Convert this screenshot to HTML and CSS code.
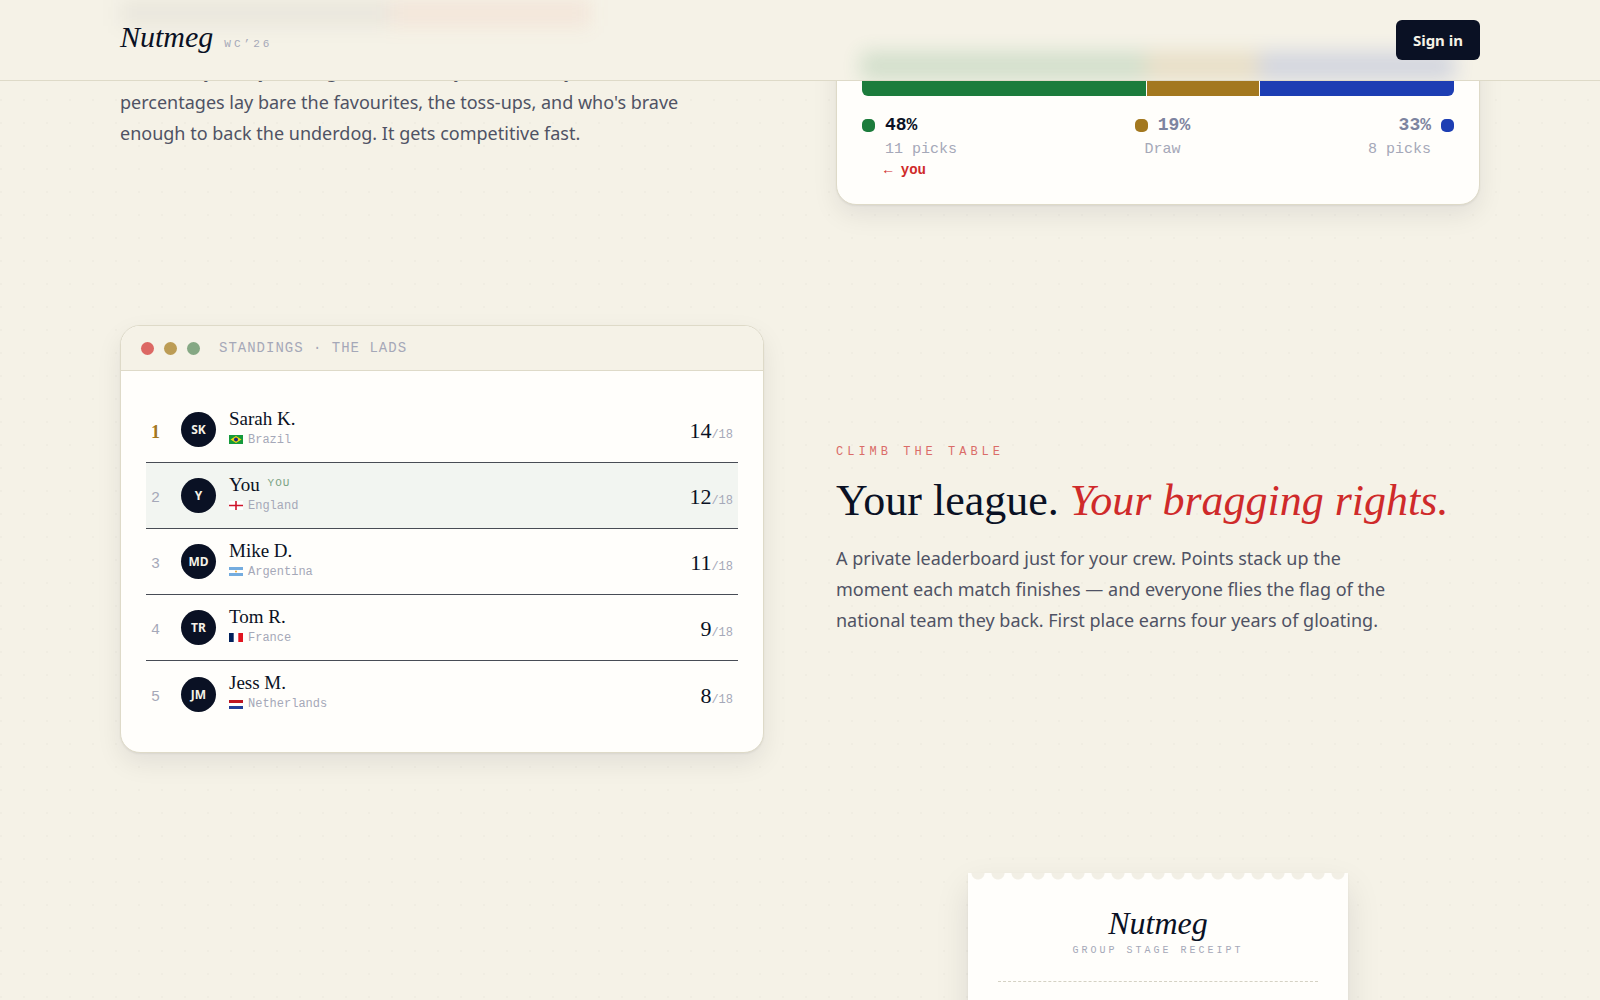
FILE: index.html
```html
<!DOCTYPE html>
<html lang="en">
<head>
    <meta charset="UTF-8">
    <meta name="viewport" content="width=device-width, initial-scale=1.0">
    <title>Nutmeg WC’26</title>
    <link rel="stylesheet" href="styles.css">
</head>
<body>
    <header class="site-header">
        <!-- Soft colour washes behind the bar -->
        <div class="glow" aria-hidden="true">
            <div class="glow-half">
                <span class="glow-ink"></span>
                <span class="glow-red"></span>
            </div>
            <div class="glow-half glow-split">
                <span class="home" style="width: 48%"></span>
                <span class="draw" style="width: 19%"></span>
                <span class="away" style="width: 33%"></span>
            </div>
        </div>
        <div class="brand">
            <a class="logo" href="#">Nutmeg</a>
            <span class="edition">WC’26</span>
        </div>
        <button class="sign-in" type="button">Sign in</button>
    </header>

    <main class="features">
        <!-- Pick split -->
        <section class="feature">
            <div class="feature-text feature-text-low">
                <p class="lead">See exactly how your league called every match today. Live percentages lay bare the favourites, the toss-ups, and who's brave enough to back the underdog. It gets competitive fast.</p>
            </div>
            <div class="card">
                <div class="card-head">
                    <span class="dot dot-red"></span>
                    <span class="dot dot-gold"></span>
                    <span class="dot dot-green"></span>
                </div>
                <div class="card-body">
                    <div class="teams">
                        <svg class="team-flag" viewBox="0 0 14 9"><path fill="#e4e4ea" d="M0 0h14v9H0z"/><path fill="#cf142b" d="M6 0h2v9H6zM0 4h14v1H0z"/></svg>
                        <svg class="team-flag" viewBox="0 0 14 9"><path fill="#009739" d="M0 0h14v9H0z"/><path fill="#fedd00" d="M7 1l5.5 3.5L7 8 1.500 4.500z"/></svg>
                    </div>
                    <div class="split-bar">
                        <span class="home" style="width: 48%"></span>
                        <span class="draw" style="width: 19%"></span>
                        <span class="away" style="width: 33%"></span>
                    </div>
                    <div class="legend">
                        <div class="legend-item">
                            <div class="share mine"><i class="home"></i>48%</div>
                            <div class="picks">11 picks</div>
                            <div class="you-mark">← you</div>
                        </div>
                        <div class="legend-item center">
                            <div class="share"><i class="draw"></i>19%</div>
                            <div class="picks">Draw</div>
                        </div>
                        <div class="legend-item right">
                            <div class="share">33%<i class="away"></i></div>
                            <div class="picks">8 picks</div>
                        </div>
                    </div>
                </div>
            </div>
        </section>

        <!-- Standings -->
        <section class="feature">
            <div class="card">
                <div class="card-head">
                    <span class="dot dot-red"></span>
                    <span class="dot dot-gold"></span>
                    <span class="dot dot-green"></span>
                    <span class="card-title">STANDINGS · THE LADS</span>
                </div>
                <div class="card-body">
                    <table class="standings">
                        <tbody>
                            <tr>
                                <td class="rank first">1</td>
                                <td class="face"><span class="avatar">SK</span></td>
                                <td class="player">
                                    <div class="name">Sarah K.</div>
                                    <div class="team"><svg class="flag" viewBox="0 0 14 9"><path fill="#159a3c" d="M0 0h14v9H0z"/><path fill="#f5d90f" d="M7 1l5.500 3.500L7 8 1.500 4.500z"/><circle cx="7" cy="4.500" r="2" fill="#1b2c7c"/></svg>Brazil</div>
                                </td>
                                <td class="score">14<small>/18</small></td>
                            </tr>
                            <tr class="is-you">
                                <td class="rank">2</td>
                                <td class="face"><span class="avatar">Y</span></td>
                                <td class="player">
                                    <div class="name">You <span class="you-tag">YOU</span></div>
                                    <div class="team"><svg class="flag" viewBox="0 0 14 9"><path fill="#fff" d="M0 0h14v9H0z"/><path fill="#cf142b" d="M6.200 0h1.600v9H6.200zM0 3.700h14v1.600H0z"/></svg>England</div>
                                </td>
                                <td class="score">12<small>/18</small></td>
                            </tr>
                            <tr>
                                <td class="rank">3</td>
                                <td class="face"><span class="avatar">MD</span></td>
                                <td class="player">
                                    <div class="name">Mike D.</div>
                                    <div class="team"><svg class="flag" viewBox="0 0 14 9"><path fill="#fff" d="M0 0h14v9H0z"/><path fill="#74acdf" d="M0 0h14v3H0zM0 6h14v3H0z"/><circle cx="7" cy="4.500" r="1" fill="#e9a93a"/></svg>Argentina</div>
                                </td>
                                <td class="score">11<small>/18</small></td>
                            </tr>
                            <tr>
                                <td class="rank">4</td>
                                <td class="face"><span class="avatar">TR</span></td>
                                <td class="player">
                                    <div class="name">Tom R.</div>
                                    <div class="team"><svg class="flag" viewBox="0 0 14 9"><path fill="#fff" d="M0 0h14v9H0z"/><path fill="#00205b" d="M0 0h4.700v9H0z"/><path fill="#e1141f" d="M9.300 0H14v9H9.300z"/></svg>France</div>
                                </td>
                                <td class="score">9<small>/18</small></td>
                            </tr>
                            <tr>
                                <td class="rank">5</td>
                                <td class="face"><span class="avatar">JM</span></td>
                                <td class="player">
                                    <div class="name">Jess M.</div>
                                    <div class="team"><svg class="flag" viewBox="0 0 14 9"><path fill="#fff" d="M0 0h14v9H0z"/><path fill="#be1622" d="M0 0h14v3H0z"/><path fill="#21409a" d="M0 6h14v3H0z"/></svg>Netherlands</div>
                                </td>
                                <td class="score">8<small>/18</small></td>
                            </tr>
                        </tbody>
                    </table>
                </div>
            </div>
            <div class="feature-text">
                <p class="eyebrow">Climb the table</p>
                <h2>Your league. <em>Your bragging rights.</em></h2>
                <p class="lead">A private leaderboard just for your crew. Points stack up the moment each match finishes — and everyone flies the flag of the national team they back. First place earns four years of gloating.</p>
            </div>
        </section>

        <!-- Receipt -->
        <section class="feature">
            <div class="feature-text"></div>
            <div class="receipt">
                <div class="receipt-logo">Nutmeg</div>
                <div class="receipt-sub">GROUP STAGE RECEIPT</div>
                <hr>
            </div>
        </section>
    </main>
</body>
</html>
```
FILE: styles.css
```css
:root {
    --bg: #f5f2e7;
    --paper: #fffefb;
    --ink: #0a1124;
    --body: #4f5264;
    --muted: #a5a8b8;
    --line: #dedac8;
    --red: #cf2a2a;
    --green: #1c7c3c;
    --gold: #a3781f;
    --blue: #1d3eb3;
    --serif: Georgia, "Liberation Serif", serif;
    --sans: "Segoe UI", "Noto Sans", sans-serif;
    --mono: "Courier New", "Liberation Mono", monospace;
}

* {
    margin: 0;
    padding: 0;
    box-sizing: border-box;
}

body {
    font-family: var(--sans);
    color: var(--ink);
    background-color: var(--bg);
    background-image: radial-gradient(circle at 1px 8px, #f0ede2 1px, transparent 1px);
    background-size: 23px 23px;
}

/* Header */
.site-header {
    position: fixed;
    top: 0;
    left: 0;
    right: 0;
    z-index: 10;
    height: 81px;
    padding: 0 120px;
    display: flex;
    align-items: center;
    justify-content: space-between;
    background: var(--bg);
    border-bottom: 1px solid var(--line);
}

.glow {
    position: absolute;
    inset: 0;
    z-index: -1;
    padding: 0 120px;
    display: grid;
    grid-template-columns: 1fr 1fr;
    gap: 72px;
    overflow: hidden;
}

.glow-half {
    display: flex;
    align-items: flex-start;
    filter: blur(10px);
}

.glow-ink,
.glow-red {
    height: 26px;
}

.glow-ink {
    width: 270px;
    background: rgba(10, 17, 36, 0.05);
}

.glow-red {
    width: 200px;
    background: rgba(232, 90, 70, 0.08);
}

.glow-split {
    align-items: flex-end;
    padding: 0 25px;
    opacity: 0.16;
}

.glow-split span {
    height: 28px;
}

.brand {
    padding-bottom: 6px;
    display: flex;
    align-items: baseline;
    gap: 11px;
}

.logo {
    font-family: var(--serif);
    font-size: 30px;
    line-height: 40px;
    font-style: italic;
    color: var(--ink);
    text-decoration: none;
}

.edition {
    font-family: var(--mono);
    font-size: 11px;
    letter-spacing: 3px;
    color: var(--muted);
}

.sign-in {
    height: 40px;
    padding: 0 17px;
    border: none;
    border-radius: 6px;
    background: var(--ink);
    color: var(--bg);
    font-family: var(--sans);
    font-size: 15px;
    font-weight: 700;
    cursor: pointer;
}

/* Features */
.features {
    margin-top: -96px;
    padding: 0 120px;
    display: flex;
    flex-direction: column;
    gap: 120px;
}

.feature {
    display: grid;
    grid-template-columns: 1fr 1fr;
    gap: 72px;
    align-items: center;
}

.feature-text-low {
    align-self: end;
    padding-bottom: 56px;
}

.eyebrow {
    font-family: var(--mono);
    font-size: 12px;
    line-height: 20px;
    letter-spacing: 4px;
    text-transform: uppercase;
    color: #da6c68;
    margin-bottom: 15px;
}

h2 {
    font-family: var(--serif);
    font-size: 44px;
    line-height: 48px;
    font-weight: 400;
    margin-bottom: 18px;
}

h2 em {
    color: var(--red);
}

.lead {
    max-width: 576px;
    font-size: 18px;
    line-height: 31px;
    color: var(--body);
}

/* Cards */
.card {
    background: var(--paper);
    border: 1px solid var(--line);
    border-radius: 20px;
    overflow: hidden;
    box-shadow: 0 1px 2px rgba(10, 17, 36, 0.06), 0 10px 26px rgba(10, 17, 36, 0.08);
}

.card-head {
    height: 45px;
    padding: 0 20px;
    display: flex;
    align-items: center;
    gap: 10px;
    background: var(--bg);
    border-bottom: 1px solid var(--line);
}

.dot {
    width: 13px;
    height: 13px;
    border-radius: 50%;
}

.dot-red { background: #dc6864; }
.dot-gold { background: #bc9c55; }
.dot-green { background: #85a884; }

.card-title {
    margin-left: 9px;
    font-family: var(--mono);
    font-size: 14px;
    letter-spacing: 1px;
    color: var(--muted);
}

.card-body {
    padding: 26px 25px 25px;
}

/* Pick split */
.teams {
    height: 62px;
    margin-bottom: 16px;
    display: flex;
    justify-content: space-between;
}

.team-flag {
    width: 28px;
    height: 18px;
}

.home { background: var(--green); }
.draw { background: var(--gold); }
.away { background: var(--blue); }

.split-bar {
    height: 42px;
    display: flex;
    border-radius: 6px;
    overflow: hidden;
}

.split-bar span + span {
    border-left: 1px solid var(--paper);
}

.legend {
    margin-top: 16px;
    display: flex;
    justify-content: space-between;
    font-family: var(--mono);
}

.share {
    display: flex;
    align-items: center;
    gap: 10px;
    font-size: 18px;
    line-height: 26px;
    font-weight: 700;
    color: #7d84a0;
}

.share.mine {
    color: var(--ink);
}

.share i {
    width: 13px;
    height: 13px;
    border-radius: 5px;
}

.picks {
    margin-left: 23px;
    font-size: 15px;
    line-height: 24px;
    color: var(--muted);
}

.you-mark {
    margin-left: 22px;
    font-size: 14px;
    line-height: 17px;
    font-weight: 700;
    color: var(--red);
}

.center .picks {
    margin-left: 0;
    text-align: center;
}

.right .share {
    justify-content: flex-end;
}

.right .picks {
    margin: 0 23px 0 0;
}

/* Standings */
.standings {
    width: 100%;
    border-collapse: separate;
    border-spacing: 0;
}

.standings td {
    height: 66px;
    vertical-align: middle;
    border-bottom: 1px solid #484c55;
}

.standings tr:last-child td {
    border-bottom: none;
}

.is-you td {
    background: #f2f5f1;
}

.standings .rank {
    width: 35px;
    padding: 6px 0 0 5px;
    font-family: var(--mono);
    font-size: 15px;
    color: var(--muted);
}

.standings .first {
    font-family: var(--serif);
    font-size: 18px;
    font-weight: 700;
    color: var(--gold);
}

.face {
    width: 48px;
}

.avatar {
    width: 35px;
    height: 35px;
    border-radius: 50%;
    display: flex;
    align-items: center;
    justify-content: center;
    background: var(--ink);
    color: var(--bg);
    font-size: 12px;
    font-weight: 700;
}

.player {
    padding-bottom: 2px;
}

.name {
    font-family: var(--serif);
    font-size: 19px;
    line-height: 22px;
}

.you-tag {
    margin-left: 3px;
    vertical-align: 5px;
    font-family: var(--mono);
    font-size: 11px;
    line-height: 11px;
    letter-spacing: 1px;
    color: #7ba384;
}

.team {
    display: flex;
    align-items: center;
    gap: 5px;
    font-family: var(--mono);
    font-size: 12px;
    line-height: 20px;
    color: var(--muted);
}

.flag {
    width: 14px;
    height: 9px;
}

.standings .score {
    padding: 3px 5px 0 0;
    text-align: right;
    font-family: var(--serif);
    font-size: 22px;
}

.score small {
    font-family: var(--mono);
    font-size: 12px;
    color: var(--muted);
}

/* Receipt */
.receipt {
    width: 380px;
    justify-self: center;
    padding: 32px 30px 120px;
    text-align: center;
    background-color: var(--paper);
    background-image: radial-gradient(circle at 10px 0, #f2efe5 6px, transparent 7px);
    background-size: 20px 8px;
    background-repeat: repeat-x;
    box-shadow: 0 1px 2px rgba(10, 17, 36, 0.06), 0 14px 32px rgba(10, 17, 36, 0.1);
}

.receipt-logo {
    font-family: var(--serif);
    font-size: 32px;
    line-height: 36px;
    font-style: italic;
}

.receipt-sub {
    font-family: var(--mono);
    font-size: 10px;
    line-height: 20px;
    letter-spacing: 3px;
    color: var(--muted);
}

.receipt hr {
    margin-top: 20px;
    border: none;
    border-top: 1px dashed #d5d2c4;
}
```
